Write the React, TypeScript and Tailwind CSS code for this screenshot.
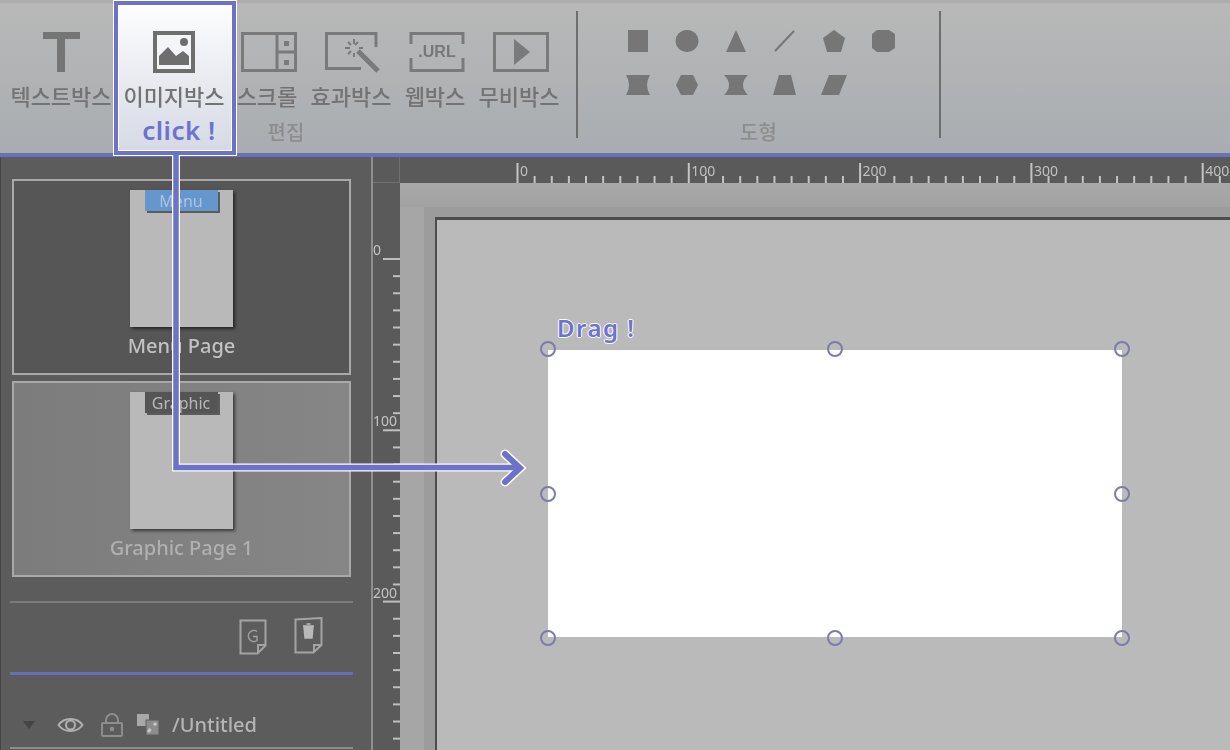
const Kr = "font-['Noto_Sans_CJK_KR','Noto_Sans',sans-serif]";

const Tool = ({ label, width, children }: { label: string; width: string; children: React.ReactNode }) => (
  <div className={`${width} relative z-10 flex flex-col items-center shrink-0`}>
    <div className="h-[44px] flex items-center justify-center blur-[0.4px]">{children}</div>
    <span className="mt-[8px] text-[22px] leading-[26px] whitespace-nowrap font-medium text-[#737373] blur-[0.5px]">
      {label}
    </span>
  </div>
);

const TextIcon = () => (
  <svg width="40" height="44" viewBox="0 0 40 44" fill="#757575">
    <path d="M2 2h37v7H24v33h-8V9H2z" />
  </svg>
);

const ImageIcon = () => (
  <svg width="42" height="44" viewBox="0 0 42 44">
    <rect x="2" y="3" width="38" height="38" fill="#f4f5f8" stroke="#6e6e6e" stroke-width="4" />
    <circle cx="31" cy="12" r="4" fill="#6e6e6e" />
    <path d="M6 35V26l9-9 8 9 7-5 6 5v9z" fill="#6e6e6e" />
  </svg>
);

const ScrollIcon = () => (
  <svg width="56" height="44" viewBox="0 0 56 44" fill="none" stroke="#7a7a7a" stroke-width="3" className="ml-[4px]">
    <rect x="1.500" y="3.500" width="53" height="37" />
    <path d="M36 3v37M36 22h19" />
    <rect x="43" y="11" width="5" height="5" fill="#7a7a7a" stroke="none" />
    <rect x="43" y="30" width="5" height="5" fill="#7a7a7a" stroke="none" />
  </svg>
);

const EffectIcon = () => (
  <svg width="56" height="44" viewBox="0 0 56 44" fill="none" stroke="#7a7a7a" className="ml-[3px]">
    <path d="M36 38.500H1.500V3.500H51V17" stroke-width="3" />
    <path d="M33 21l20 20" stroke-width="5" />
    <path d="M29 9v5M29 23v4M20 18h5M34 18h4M23 12l3 3M33 12l-3 3M23 24l3-3" stroke-width="2" />
  </svg>
);

const UrlIcon = () => (
  <svg width="56" height="44" viewBox="0 0 56 44" fill="none" stroke="#7a7a7a" stroke-width="3" className="ml-[4px]">
    <path d="M2 14V3.500h52V14M2 28v12.500h52V28" />
  </svg>
);

const MovieIcon = () => (
  <svg width="56" height="44" viewBox="0 0 56 44" fill="none" className="ml-[3px]">
    <rect x="1.500" y="3.500" width="53" height="37" stroke="#7a7a7a" stroke-width="3" />
    <path d="M21 9l16 13-16 13z" fill="#7a7a7a" />
  </svg>
);

const shapes = [
  "M3 2h20v22H3z",
  "M13 2a11.500 11 0 1 0 .01 0z",
  "M13 2l10 22H3z",
  "M3 23L22 3",
  "M13 2l11 8-4 14H6L2 10z",
  "M7 2h12l6 4v14l-6 4H7l-5-4V6z",
  "M1 3h24q-6 10 0 20H1q6-10 0-20z",
  "M7 3h12l5 10-5 10H7L2 13z",
  "M1 3h24q-10 10 0 20H1q10-10 0-20z",
  "M7 3h12l5 20H1z",
  "M8 3h18l-8 20H0z",
];

const Shape = ({ d }: { d: string }) => (
  <div className="h-[44px] flex items-center justify-center">
    <svg width="26" height="26" viewBox="0 0 26 26" className="blur-[0.4px]">
      <path d={d} fill="#767676" stroke="#767676" stroke-width={d === "M3 23L22 3" ? 2 : 0} />
    </svg>
  </div>
);

const HRuler = () => {
  const ticks = Array.from({ length: 44 }, (_, i) => i);
  return (
    <svg width="830" height="26" className="block blur-[0.4px]">
      {ticks.map((i) => {
        const x = 117.500 + i * 17.13;
        return <line key={i} x1={x} x2={x} y1={i % 10 === 0 ? 6 : 19} y2="26" stroke="#c4c4c4" stroke-width="2" />;
      })}
      {["0", "100", "200", "300", "400"].map((t, i) => (
        <text key={t} x={120 + i * 171.3} y="19" fontSize="14" fill="#c0c0c0" fontFamily="Noto Sans">
          {t}
        </text>
      ))}
    </svg>
  );
};

const VRuler = () => {
  const ticks = Array.from({ length: 34 }, (_, i) => i);
  return (
    <svg width="27" height="567" className="block blur-[0.4px]">
      {ticks.map((i) => {
        const y = 76 + i * 17.13;
        return <line key={i} x1={i % 10 === 0 ? 10 : 20} x2="27" y1={y} y2={y} stroke="#c0c0c0" stroke-width="2" />;
      })}
      {["0", "100", "200"].map((t, i) => (
        <text key={t} x="0" y={72 + i * 171.3} fontSize="14" fill="#c4c4c4" fontFamily="Noto Sans">
          {t}
        </text>
      ))}
    </svg>
  );
};

const PageCard = ({ tab, label, active }: { tab: string; label: string; active?: boolean }) => (
  <div
    className={`h-[196px] border-2 border-[#a9a9a9] flex flex-col items-center pt-[9px] ${
      active ? "bg-gradient-to-r from-[#7c7c7c] to-[#868686]" : "bg-[#565656]"
    }`}
  >
    <div className="w-[103px] h-[137px] bg-[#b9b9b9] shadow-[2px_2px_3px_rgba(0,0,0,0.55)] flex flex-col items-center shrink-0">
      <div
        className={`-ml-[1px] w-[73px] h-[21px] flex items-center justify-center text-[16px] leading-none shadow-[2px_2px_0_rgba(60,60,60,0.75)] blur-[0.3px] ${
          active ? "bg-[#555555] text-[#b9b9b9]" : "bg-[#6596cc] text-[#a9c5e2]"
        }`}
      >
        {tab}
      </div>
    </div>
    <span className={`mt-[4px] text-[20px] leading-[30px] font-medium blur-[0.4px] ${active ? "text-[#b0b0b0]" : "text-[#c2c2c2]"}`}>{label}</span>
  </div>
);

const Sidebar = () => (
  <aside className="w-[371px] shrink-0 bg-[#5c5c5c] border-l border-[#444444] pt-[22px] flex flex-col font-['Noto_Sans',sans-serif]">
    <div className="ml-[11px] w-[339px] flex flex-col gap-[6px]">
      <PageCard tab="Menu" label="Menu Page" />
      <PageCard tab="Graphic" label="Graphic Page 1" active />
    </div>
    <div className="ml-[9px] w-[343px] mt-[24px] h-[2px] bg-[#7b7b7b]" />
    <div className="ml-[9px] w-[343px] h-[69px] flex justify-end items-start pt-[14px] pr-[30px] gap-[27px] blur-[0.3px]">
      <svg width="28" height="36" viewBox="0 0 28 36" fill="none" stroke="#a3a3a3" stroke-width="2" className="mt-[2px]">
        <path d="M1.500 1.500h25v25l-8 8h-17zM26 26h-7v8" />
        <path d="M18 12.500a5.500 5.500 0 1 0 0 9v-4h-4" stroke-width="1.400" />
      </svg>
      <svg width="29" height="37" viewBox="0 0 29 37" fill="none" stroke="#a3a3a3" stroke-width="2">
        <path d="M1.500 2.500l26-1.500v27l-8 7.500h-18zM27 28h-7v7" />
        <path d="M10 10h9l-1 11h-7zM9 9h11M12.500 7h4" fill="#b9b9b9" stroke="#b9b9b9" stroke-width="1.400" />
      </svg>
    </div>
    <div className="ml-[9px] w-[343px] h-[3px] bg-[#676db8]" />
    <div className="ml-[9px] w-[343px] mt-[36px] flex items-center blur-[0.3px]">
      <svg width="14" height="10" viewBox="0 0 14 10" className="ml-[12px]">
        <path d="M1 1h12L7 9z" fill="#444444" />
      </svg>
      <svg width="27" height="20" viewBox="0 0 27 20" fill="none" stroke="#b0b0b0" stroke-width="2" className="ml-[21px]">
        <path d="M1.500 10C7 2 20 2 25.500 10 20 18 7 18 1.500 10z" />
        <circle cx="13.500" cy="10" r="4.500" />
      </svg>
      <svg width="22" height="24" viewBox="0 0 22 24" fill="none" stroke="#8e8e8e" stroke-width="2" className="ml-[17px]">
        <rect x="1" y="10" width="20" height="13" rx="1" />
        <path d="M5 10V7a6 6 0 0 1 12 0v3" />
        <circle cx="11" cy="16" r="1.300" fill="#8e8e8e" />
      </svg>
      <svg width="24" height="24" viewBox="0 0 24 24" className="ml-[13px]">
        <rect x="1" y="1" width="12" height="12" fill="#a8a8a8" />
        <rect x="10" y="7" width="13" height="15" fill="#8c8c8c" stroke="#5c5c5c" />
        <path d="M12 19l8-9" stroke="#c6c6c6" stroke-width="3" stroke-dasharray="4 5" />
      </svg>
      <span className="ml-[12px] text-[20px] leading-[28px] font-medium text-[#b5b5b5]">/Untitled</span>
    </div>
    <div className="ml-[9px] w-[343px] mt-[8px] h-[2px] bg-[#8c8c8c]" />
  </aside>
);

const Handle = ({ pos }: { pos: string }) => (
  <span className={`absolute w-[16px] h-[16px] rounded-full border-[2.500px] border-[#7b7bac] blur-[0.5px] ${pos}`} />
);

export default function App() {
  return (
    <div className={`relative w-[1230px] h-[750px] overflow-hidden bg-[#5c5c5c] ${Kr}`}>
      <header className="relative h-[153px] flex bg-gradient-to-b from-[#b8b8b8] to-[#a9adb1] border-t-[3px] border-[#adadad]">
        <div className="absolute left-[113px] -top-[3px] w-[124px] h-[156px] z-0 border border-white">
          <div className="h-full border-[4px] border-[#6c72c8] ">
            <div className="h-full border border-white bg-gradient-to-b from-[#fdfdfe] to-[#d6dae4] flex flex-col items-center justify-end">
              <span className="ml-[8px] mb-[3px] text-[26px] leading-[34px] tracking-[0.5px] font-semibold text-[#6c72d0] font-['Noto_Sans',sans-serif]">
                click !
              </span>
            </div>
          </div>
        </div>

        <div className="w-[572px] flex flex-col items-center pt-[27px]">
          <div className="w-full flex pl-[10px]">
            <Tool label="텍스트박스" width="w-[102px]"><TextIcon /></Tool>
            <div className="w-[2px]" />
            <Tool label="이미지박스" width="w-[122px]"><ImageIcon /></Tool>
            <div className="w-[2px]" />
            <Tool label="스크롤" width="w-[62px]"><ScrollIcon /></Tool>
            <Tool label="효과박스" width="w-[106px]"><EffectIcon /></Tool>
            <Tool label="웹박스" width="w-[62px]">
              <div className="relative">
                <UrlIcon />
                <span className="absolute inset-0 ml-[4px] flex items-center justify-center text-[16px] font-bold text-[#777777] font-['Liberation_Sans',sans-serif]">
                  .URL
                </span>
              </div>
            </Tool>
            <Tool label="무비박스" width="w-[106px]"><MovieIcon /></Tool>
          </div>
          <span className="mt-[11px] text-[20px] leading-[26px] font-medium text-[#8d8d8d] blur-[0.5px]">편집</span>
        </div>

        <div className="mt-[8px] ml-[4px] w-[2px] h-[127px] bg-[#6e6e6e]" />

        <div className="w-[361px] flex flex-col items-center pt-[16px]">
          <div className="w-[294px] ml-[3px] grid grid-cols-6">
            {shapes.map((d) => (
              <Shape key={d} d={d} />
            ))}
          </div>
          <span className="mt-[12px] text-[20px] leading-[26px] font-medium text-[#8d8d8d] blur-[0.5px]">도형</span>
        </div>

        <div className="mt-[8px] w-[2px] h-[127px] bg-[#6e6e6e]" />
      </header>
      <div className="h-[4px] bg-[#6b70b8]" />

      <main className="flex h-[593px]">
        <Sidebar />
        <div className="w-[2px] bg-[#8f8f8f]" />
        <div className="w-[27px] shrink-0 bg-[#5a5a5a] flex flex-col">
          <div className="h-[26px] border-b border-r border-[#717171]" />
          <VRuler />
        </div>

        <div className="flex-1 flex flex-col">
          <div className="h-[26px] bg-[#5a5a5a]">
            <HRuler />
          </div>
          <div className="h-[24px] bg-gradient-to-b from-[#a8a8a8] to-[#a2a2a2]" />
          <div className="h-[10px] flex">
            <div className="w-[24px] shrink-0 bg-[#a6a6a6]" />
            <div className="flex-1 bg-[#9c9c9c]" />
          </div>
          <div className="flex-1 flex">
            <div className="w-[24px] shrink-0 bg-[#a6a6a6]" />
            <div className="w-[11px] shrink-0 bg-[#9c9c9c]" />
            <div className="flex-1 bg-[#bababa] border-t-[3px] border-l-2 border-[#4d4d4d] pl-[111px] pt-[130px]">
              <div className="relative w-[574px] h-[287px] bg-white">
                <span className="absolute -top-[38px] left-[9px] text-[24px] leading-[32px] font-semibold tracking-[1.500px] text-[#6c72d0] font-['Noto_Sans',sans-serif] [text-shadow:1px_0_0_#fff,-1px_0_0_#fff,0_1px_0_#fff,0_-1px_0_#fff]">
                  Drag !
                </span>
                <Handle pos="-left-[8px] -top-[9px]" />
                <Handle pos="left-[279px] -top-[9px]" />
                <Handle pos="left-[566px] -top-[9px]" />
                <Handle pos="-left-[8px] top-[136px]" />
                <Handle pos="left-[566px] top-[136px]" />
                <Handle pos="-left-[8px] top-[280px]" />
                <Handle pos="left-[279px] top-[280px]" />
                <Handle pos="left-[566px] top-[280px]" />
              </div>
            </div>
          </div>
        </div>
      </main>

      {/* connector from the image tool to the drop spot */}
      <svg width="1230" height="750" className="absolute inset-0 pointer-events-none" fill="none">
        <path d="M176 155V467.500H518" stroke="#fff" stroke-width="8" />
        <path d="M505 454l15 14-15 14" stroke="#fff" stroke-width="9" stroke-linecap="round" />
        <path d="M176 155V467.500H518" stroke="#6c72c8" stroke-width="5.500" />
        <path d="M505 454l15 14-15 14" stroke="#6c72c8" stroke-width="6" stroke-linecap="round" />
      </svg>
    </div>
  );
}
